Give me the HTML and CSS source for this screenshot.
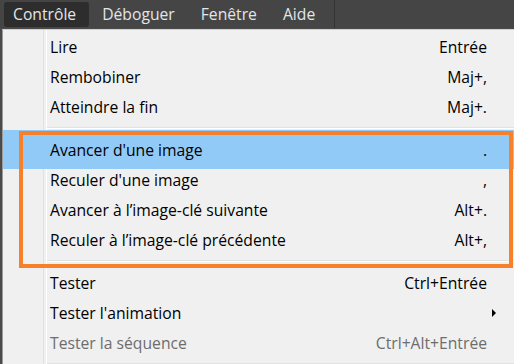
FILE: index.html
```html
<!DOCTYPE html>
<html lang="fr">
<head>
    <meta charset="UTF-8" />
    <title>Menu Contrôle</title>
    <link rel="stylesheet" href="styles.css">
</head>
<body>

    <!-- Barre de menus -->
    <div class="menubar">
        <span class="tab active">Contrôle</span>
        <span class="tab">Déboguer</span>
        <span class="tab">Fenêtre</span>
        <span class="tab">Aide</span>
        <span class="divider"></span>
    </div>

    <!-- Menu déroulant -->
    <div class="menu">
        <div class="item"><span class="label">Lire</span><span class="key">Entrée</span></div>
        <div class="item"><span class="label">Rembobiner</span><span class="key">Maj+,</span></div>
        <div class="item"><span class="label">Atteindre la fin</span><span class="key">Maj+.</span></div>

        <div class="sep"></div>

        <div class="item hover"><span class="label">Avancer d'une image</span><span class="key">.</span></div>
        <div class="item"><span class="label">Reculer d'une image</span><span class="key">,</span></div>
        <div class="item"><span class="label">Avancer à l’image-clé suivante</span><span class="key">Alt+.</span></div>
        <div class="item"><span class="label">Reculer à l’image-clé précédente</span><span class="key">Alt+,</span></div>

        <div class="sep"></div>

        <div class="item"><span class="label">Tester</span><span class="key">Ctrl+Entrée</span></div>
        <div class="item"><span class="label">Tester l'animation</span><span class="arrow"></span></div>
        <div class="item disabled"><span class="label">Tester la séquence</span><span class="key">Ctrl+Alt+Entrée</span></div>

        <div class="sep"></div>

        <!-- Cadre orange de mise en évidence -->
        <div class="callout"></div>
    </div>

</body>
</html>
```

FILE: styles.css
```css
* {
    box-sizing: border-box;
}

body {
    margin: 0;
    background: #4a4a4a;
    font-family: 'Open Sans', 'Noto Sans', sans-serif;
    font-variant-ligatures: none;
    height: 364px;
    overflow: hidden;
}

/* Menu bar */
.menubar {
    display: flex;
    align-items: center;
    height: 28px;
    padding: 0 0 0 4px;
    background: #454545;
    font-size: 15.7px;
}

.tab {
    height: 25px;
    line-height: 24px;
    padding: 0 13px;
    color: #e2e6ea;
    border-radius: 3px;
}

.tab.active {
    padding-left: 9px;
    background: #2d2d2d;
}

.divider {
    width: 1px;
    height: 28px;
    margin-left: 6px;
    background: #333;
}

/* Dropdown */
.menu {
    position: relative;
    margin: 1px 0 0 2px;
    height: 335px;
    background: #f0f0f0;
    border-left: 1px solid #9a9a9a;
    border-top: 1px solid #d0d0d0;
    padding-top: 2px;
    font-size: 15.7px;
}

/* icon column line */
.menu::before {
    content: "";
    position: absolute;
    left: 40px;
    top: 0;
    bottom: 0;
    width: 2px;
    border-left: 1px solid #e2e2e2;
    border-right: 1px solid #fff;
}

.item {
    position: relative;
    display: flex;
    align-items: center;
    height: 30px;
    padding: 0 27px 0 47px;
    color: #000;
}

.item .label {
    flex: 1;
}

.item.hover {
    height: 39px;
    margin: -5px 0 -4px;
    padding-top: 1px;
    background: #91c9f7;
}

.item.disabled {
    color: #6d6d6d;
}

.arrow {
    width: 0;
    height: 0;
    margin-right: -9px;
    border-left: 4px solid #000;
    border-top: 4px solid transparent;
    border-bottom: 4px solid transparent;
}

.sep {
    height: 2px;
    margin: 5px 0 6px 43px;
    border-top: 1px solid #e2e2e2;
    border-bottom: 1px solid #fff;
}

/* Orange annotation frame over the menu */
.callout {
    position: absolute;
    left: 16px;
    top: 101px;
    width: 494px;
    height: 137px;
    border: 4px solid #f7812b;
}
```
